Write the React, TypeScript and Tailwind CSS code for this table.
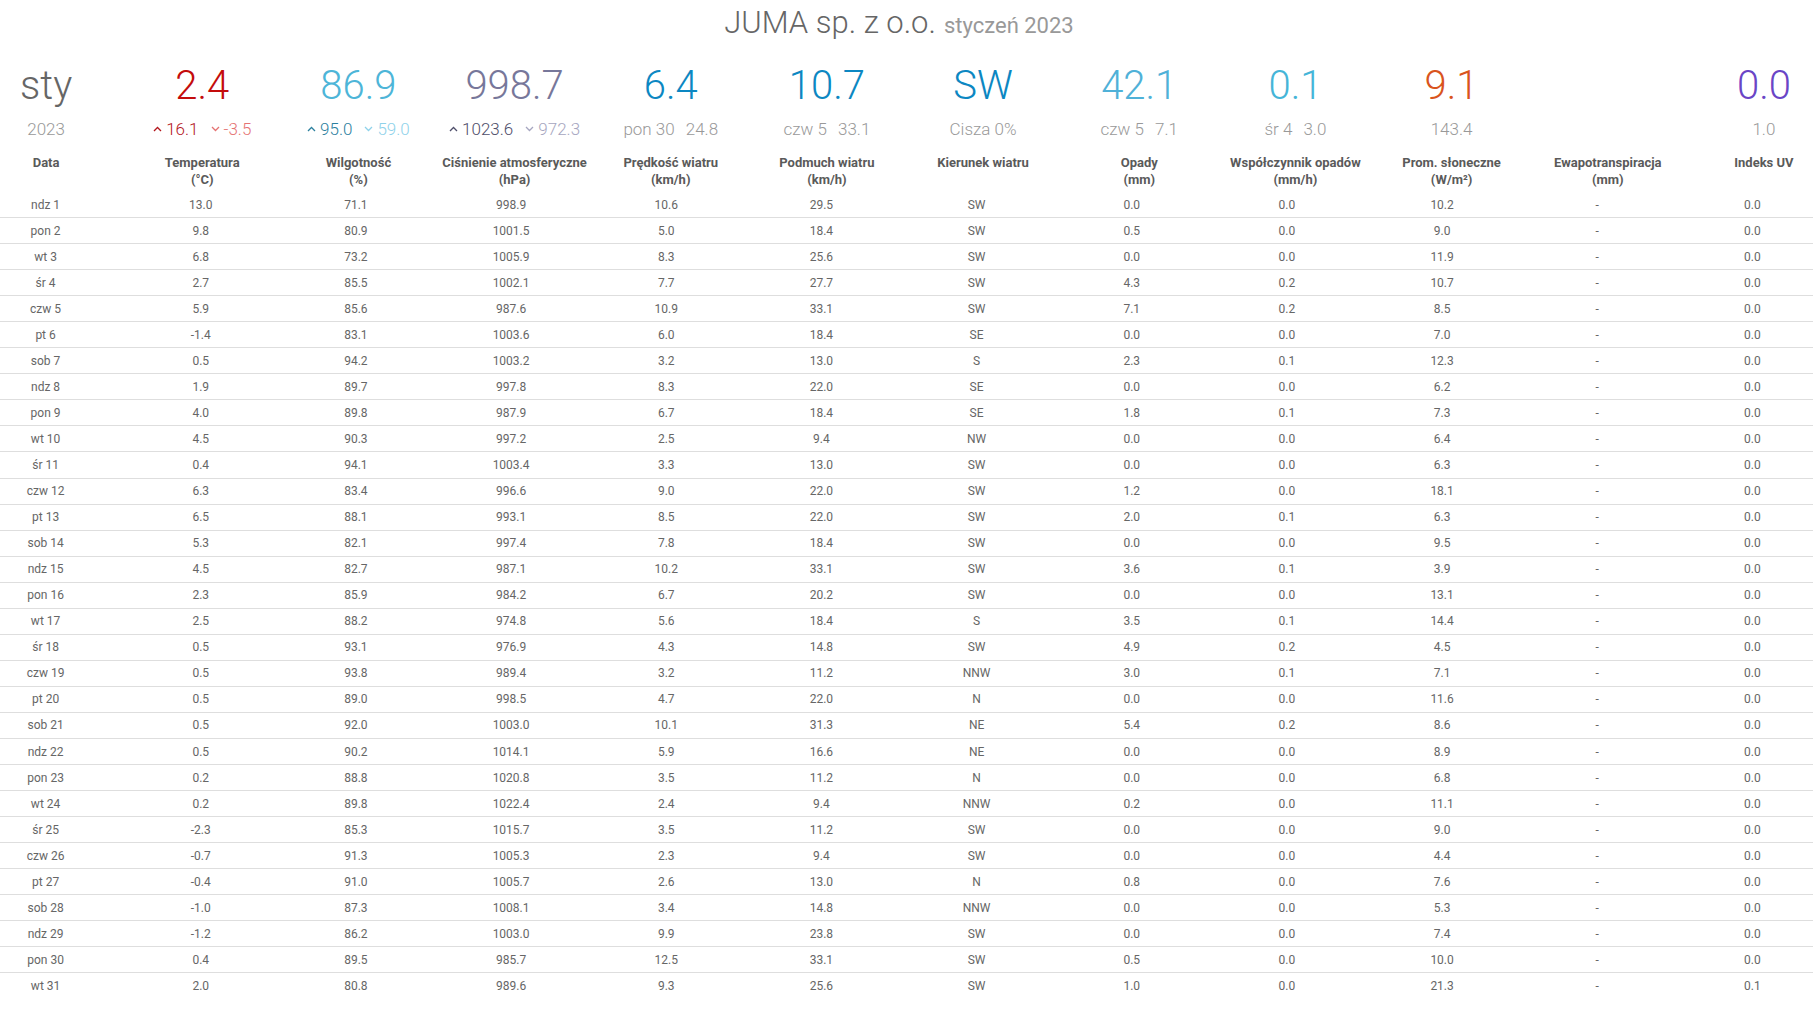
import React from "react"

// daily rows: [day, temp, hum, press, wind, gust, dir, rain, rate, sun, et, uv]
const rows: string[][] = [
  ["ndz 1", "13.0", "71.1", "998.9", "10.6", "29.5", "SW", "0.0", "0.0", "10.2", "-", "0.0"],
  ["pon 2", "9.8", "80.9", "1001.5", "5.0", "18.4", "SW", "0.5", "0.0", "9.0", "-", "0.0"],
  ["wt 3", "6.8", "73.2", "1005.9", "8.3", "25.6", "SW", "0.0", "0.0", "11.9", "-", "0.0"],
  ["śr 4", "2.7", "85.5", "1002.1", "7.7", "27.7", "SW", "4.3", "0.2", "10.7", "-", "0.0"],
  ["czw 5", "5.9", "85.6", "987.6", "10.9", "33.1", "SW", "7.1", "0.2", "8.5", "-", "0.0"],
  ["pt 6", "-1.4", "83.1", "1003.6", "6.0", "18.4", "SE", "0.0", "0.0", "7.0", "-", "0.0"],
  ["sob 7", "0.5", "94.2", "1003.2", "3.2", "13.0", "S", "2.3", "0.1", "12.3", "-", "0.0"],
  ["ndz 8", "1.9", "89.7", "997.8", "8.3", "22.0", "SE", "0.0", "0.0", "6.2", "-", "0.0"],
  ["pon 9", "4.0", "89.8", "987.9", "6.7", "18.4", "SE", "1.8", "0.1", "7.3", "-", "0.0"],
  ["wt 10", "4.5", "90.3", "997.2", "2.5", "9.4", "NW", "0.0", "0.0", "6.4", "-", "0.0"],
  ["śr 11", "0.4", "94.1", "1003.4", "3.3", "13.0", "SW", "0.0", "0.0", "6.3", "-", "0.0"],
  ["czw 12", "6.3", "83.4", "996.6", "9.0", "22.0", "SW", "1.2", "0.0", "18.1", "-", "0.0"],
  ["pt 13", "6.5", "88.1", "993.1", "8.5", "22.0", "SW", "2.0", "0.1", "6.3", "-", "0.0"],
  ["sob 14", "5.3", "82.1", "997.4", "7.8", "18.4", "SW", "0.0", "0.0", "9.5", "-", "0.0"],
  ["ndz 15", "4.5", "82.7", "987.1", "10.2", "33.1", "SW", "3.6", "0.1", "3.9", "-", "0.0"],
  ["pon 16", "2.3", "85.9", "984.2", "6.7", "20.2", "SW", "0.0", "0.0", "13.1", "-", "0.0"],
  ["wt 17", "2.5", "88.2", "974.8", "5.6", "18.4", "S", "3.5", "0.1", "14.4", "-", "0.0"],
  ["śr 18", "0.5", "93.1", "976.9", "4.3", "14.8", "SW", "4.9", "0.2", "4.5", "-", "0.0"],
  ["czw 19", "0.5", "93.8", "989.4", "3.2", "11.2", "NNW", "3.0", "0.1", "7.1", "-", "0.0"],
  ["pt 20", "0.5", "89.0", "998.5", "4.7", "22.0", "N", "0.0", "0.0", "11.6", "-", "0.0"],
  ["sob 21", "0.5", "92.0", "1003.0", "10.1", "31.3", "NE", "5.4", "0.2", "8.6", "-", "0.0"],
  ["ndz 22", "0.5", "90.2", "1014.1", "5.9", "16.6", "NE", "0.0", "0.0", "8.9", "-", "0.0"],
  ["pon 23", "0.2", "88.8", "1020.8", "3.5", "11.2", "N", "0.0", "0.0", "6.8", "-", "0.0"],
  ["wt 24", "0.2", "89.8", "1022.4", "2.4", "9.4", "NNW", "0.2", "0.0", "11.1", "-", "0.0"],
  ["śr 25", "-2.3", "85.3", "1015.7", "3.5", "11.2", "SW", "0.0", "0.0", "9.0", "-", "0.0"],
  ["czw 26", "-0.7", "91.3", "1005.3", "2.3", "9.4", "SW", "0.0", "0.0", "4.4", "-", "0.0"],
  ["pt 27", "-0.4", "91.0", "1005.7", "2.6", "13.0", "N", "0.8", "0.0", "7.6", "-", "0.0"],
  ["sob 28", "-1.0", "87.3", "1008.1", "3.4", "14.8", "NNW", "0.0", "0.0", "5.3", "-", "0.0"],
  ["ndz 29", "-1.2", "86.2", "1003.0", "9.9", "23.8", "SW", "0.0", "0.0", "7.4", "-", "0.0"],
  ["pon 30", "0.4", "89.5", "985.7", "12.5", "33.1", "SW", "0.5", "0.0", "10.0", "-", "0.0"],
  ["wt 31", "2.0", "80.8", "989.6", "9.3", "25.6", "SW", "1.0", "0.0", "21.3", "-", "0.1"],
]

const headers: [string, string?][] = [
  ["Data"],
  ["Temperatura", "(°C)"],
  ["Wilgotność", "(%)"],
  ["Ciśnienie atmosferyczne", "(hPa)"],
  ["Prędkość wiatru", "(km/h)"],
  ["Podmuch wiatru", "(km/h)"],
  ["Kierunek wiatru"],
  ["Opady", "(mm)"],
  ["Współczynnik opadów", "(mm/h)"],
  ["Prom. słoneczne", "(W/m²)"],
  ["Ewapotranspiracja", "(mm)"],
  ["Indeks UV"],
]

function Up({ className }: { className: string }) {
  return (
    <svg width="9" height="6" viewBox="0 0 9 6" className={className}>
      <polyline points="1,5 4.5,1.5 8,5" fill="none" stroke="currentColor" strokeWidth="1.3" />
    </svg>
  )
}

function Down({ className }: { className: string }) {
  return (
    <svg width="9" height="6" viewBox="0 0 9 6" className={className}>
      <polyline points="1,1 4.5,4.5 8,1" fill="none" stroke="currentColor" strokeWidth="1.3" />
    </svg>
  )
}

function MinMax({ hi, lo, hiColor, loColor }: { hi: string; lo: string; hiColor: string; loColor: string }) {
  return (
    <div className="flex items-center justify-center">
      <Up className={`mr-[4px] ${hiColor}`} />
      <span className={hiColor}>{hi}</span>
      <Down className={`ml-[12px] mr-[4px] ${loColor}`} />
      <span className={loColor}>{lo}</span>
    </div>
  )
}

function Pair({ a, b }: { a: string; b: string }) {
  return (
    <div className="flex items-center justify-center gap-[11px]">
      <span>{a}</span>
      <span>{b}</span>
    </div>
  )
}

export default function App() {
  return (
    <div className="h-screen overflow-hidden bg-white font-['Roboto','Liberation_Sans',sans-serif]">
      <div className="pr-[15px] pt-[3px] h-[43px] flex items-baseline justify-center leading-[40px]">
        <span className="text-[31px] font-light text-[#666]">JUMA sp. z o.o.</span>
        <span className="ml-[8px] text-[22px] text-[#999]">styczeń 2023</span>
      </div>

      <div className="w-[1874px] ml-[-32px]">
        {/* big values */}
        <div className="mt-[19px] grid grid-cols-12 text-center text-[40px] font-light leading-[48px]">
          <div className="text-[#666]">sty</div>
          <div className="text-[#c40c0c]">2.4</div>
          <div className="text-[#4db5d8]">86.9</div>
          <div className="text-[#77779a]">998.7</div>
          <div className="text-[#0c87c2]">6.4</div>
          <div className="text-[#0c87c2]">10.7</div>
          <div className="text-[#0c87c2]">SW</div>
          <div className="text-[#4fb1d8]">42.1</div>
          <div className="text-[#45b5d8]">0.1</div>
          <div className="text-[#d9541d]">9.1</div>
          <div></div>
          <div className="text-[#6a45c6]">0.0</div>
        </div>

        {/* sub values */}
        <div className="mt-[7px] grid grid-cols-12 text-center text-[17px] font-light leading-[24px] text-[#999]">
          <div>2023</div>
          <MinMax hi="16.1" lo="-3.5" hiColor="text-[#b3161c]" loColor="text-[#e57373]" />
          <MinMax hi="95.0" lo="59.0" hiColor="text-[#2c809e]" loColor="text-[#8fd2ea]" />
          <MinMax hi="1023.6" lo="972.3" hiColor="text-[#4e4e6a]" loColor="text-[#a6a6c0]" />
          <Pair a="pon 30" b="24.8" />
          <Pair a="czw 5" b="33.1" />
          <div>Cisza 0%</div>
          <Pair a="czw 5" b="7.1" />
          <Pair a="śr 4" b="3.0" />
          <div>143.4</div>
          <div></div>
          <div>1.0</div>
        </div>

        {/* column labels */}
        <div className="mt-[13px] h-[38px] grid grid-cols-12 text-center text-[13px] font-bold leading-[17px] text-[#5a5a5a]">
          {headers.map(([label, unit]) => (
            <div key={label}>
              <div>{label}</div>
              {unit && <div>{unit}</div>}
            </div>
          ))}
        </div>
      </div>

      <div className="w-[1862px] ml-[-32px]">
        {rows.map((r, i) => (
          <div
            key={r[0]}
            className={`grid grid-cols-12 h-[26.06px] items-center text-center text-[12px] text-[#666] ${i < rows.length - 1 ? "border-b border-[#dedede]" : ""}`}
          >
            {r.map((v, j) => (
              <div key={j}>{v}</div>
            ))}
          </div>
        ))}
      </div>
    </div>
  )
}
